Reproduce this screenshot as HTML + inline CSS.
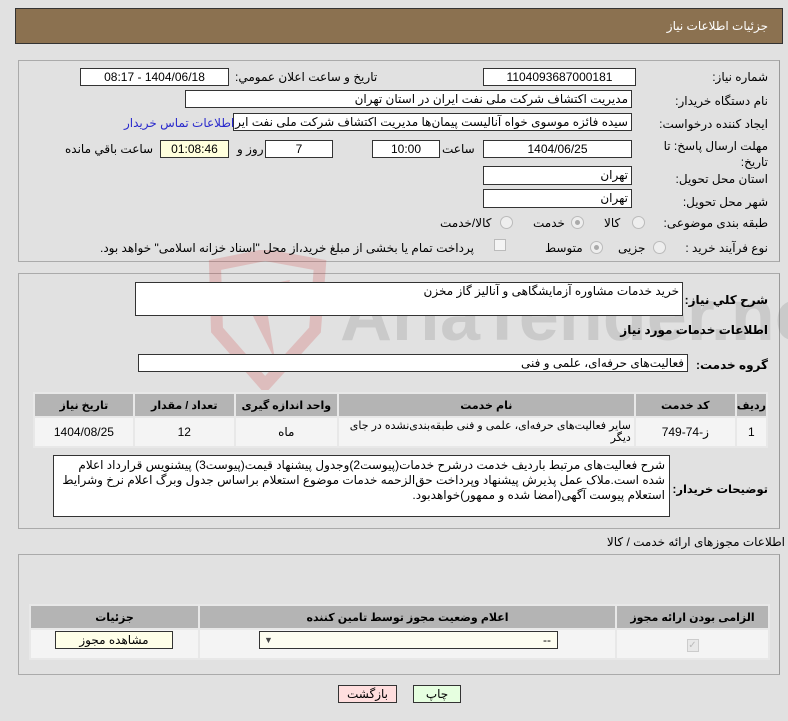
<!DOCTYPE html>
<html><head><meta charset="utf-8"><style>
*{box-sizing:border-box;margin:0;padding:0}
body{width:788px;height:721px;background:#e1e1e1;font-family:"Liberation Sans","DejaVu Sans",sans-serif;font-size:12px;color:#000;position:relative;overflow:hidden;direction:rtl}
.a{position:absolute;white-space:nowrap}
.box{position:absolute;background:#fff;border:1px solid #333;text-align:center;line-height:16px;overflow:hidden;white-space:nowrap}
.panel{position:absolute;border:1px solid #aaa;border-right-color:#999;left:18px;width:762px}
.lbl{position:absolute;right:20px;white-space:nowrap}
.rad{position:absolute;width:13px;height:13px;border-radius:50%;border:1px solid #bbb;background:#eee}
.rad.on::after{content:"";position:absolute;left:3px;top:3px;width:5px;height:5px;border-radius:50%;background:#aaa}
table{border-collapse:collapse;position:absolute}
td,th{border:2px solid #e8e8e8;text-align:center}
th{background:#b4b4b4;font-weight:bold;font-size:11px;height:24px}
td{background:#f4f4f4;height:30px}
</style></head><body>
<div class="a" style="left:15px;top:8px;width:768px;height:36px;background:#8b7150;border:1px solid #333"></div>
<div class="a" style="right:20px;top:19px;color:#fff">جزئیات اطلاعات نیاز</div>

<div class="panel" style="top:60px;height:202px"></div>
<div class="panel" style="top:273px;height:256px"></div>

<svg class="a" style="left:195px;top:250px;opacity:.18" width="600" height="140" viewBox="0 0 600 140">
<path d="M20 15 L70 5 L125 15 L120 80 L70 135 L22 80 Z" fill="none" stroke="#c22" stroke-width="12"/>
<path d="M45 40 L95 30 L85 60 L72 60 L80 110 L60 70 Z" fill="#c22"/>
<text x="145" y="90" font-size="72" font-family="Liberation Sans" font-weight="bold" fill="#666" direction="ltr">AriaTender.neT</text>
</svg>

<div class="lbl" style="top:70px">شماره نیاز:</div>
<div class="box" style="left:483px;top:68px;width:153px;height:18px">1104093687000181</div>
<div class="a" style="left:235px;top:70px">تاریخ و ساعت اعلان عمومي:</div>
<div class="box" style="left:80px;top:68px;width:149px;height:18px">1404/06/18 - 08:17</div>
<div class="lbl" style="top:94px">نام دستگاه خریدار:</div>
<div class="box" style="left:185px;top:90px;width:447px;height:18px;text-align:right;padding-right:3px">مدیریت اکتشاف شرکت ملی نفت ایران در استان تهران</div>
<div class="lbl" style="top:117px">ایجاد کننده درخواست:</div>
<div class="box" style="left:233px;top:113px;width:399px;height:18px;text-align:right;padding-right:3px">سیده فائزه موسوی خواه آنالیست پیمان‌ها مدیریت اکتشاف شرکت ملی نفت ایر</div>
<div class="a" style="left:124px;top:116px;color:#2a2acc">اطلاعات تماس خریدار</div>
<div class="lbl" style="top:139px">مهلت ارسال پاسخ: تا</div>
<div class="lbl" style="top:155px">تاریخ:</div>
<div class="box" style="left:483px;top:140px;width:149px;height:18px">1404/06/25</div>
<div class="a" style="left:442px;top:142px">ساعت</div>
<div class="box" style="left:372px;top:140px;width:68px;height:18px">10:00</div>
<div class="box" style="left:265px;top:140px;width:68px;height:18px">7</div>
<div class="a" style="left:237px;top:142px">روز و</div>
<div class="box" style="left:160px;top:140px;width:69px;height:18px;background:#ffffdd">01:08:46</div>
<div class="a" style="left:65px;top:142px">ساعت باقي مانده</div>
<div class="lbl" style="top:172px">استان محل تحویل:</div>
<div class="box" style="left:483px;top:166px;width:149px;height:19px;text-align:right;padding-right:3px">تهران</div>
<div class="lbl" style="top:195px">شهر محل تحویل:</div>
<div class="box" style="left:483px;top:189px;width:149px;height:19px;text-align:right;padding-right:3px">تهران</div>
<div class="lbl" style="top:216px">طبقه بندی موضوعی:</div>
<div class="rad" style="left:632px;top:216px"></div><div class="a" style="left:604px;top:216px">کالا</div>
<div class="rad on" style="left:571px;top:216px"></div><div class="a" style="left:533px;top:216px">خدمت</div>
<div class="rad" style="left:500px;top:216px"></div><div class="a" style="left:440px;top:216px">کالا/خدمت</div>
<div class="lbl" style="top:241px">نوع فرآیند خرید :</div>
<div class="rad" style="left:653px;top:241px"></div><div class="a" style="left:618px;top:241px">جزیی</div>
<div class="rad on" style="left:590px;top:241px"></div><div class="a" style="left:545px;top:241px">متوسط</div>
<div class="a" style="left:494px;top:239px;width:12px;height:12px;border:1px solid #bbb;background:#f4f4f4"></div>
<div class="a" style="left:100px;top:241px">پرداخت تمام یا بخشی از مبلغ خرید،از محل "اسناد خزانه اسلامی" خواهد بود.</div>

<div class="lbl" style="top:293px;font-weight:bold">شرح کلي نیاز:</div>
<div class="box" style="left:135px;top:282px;width:548px;height:34px;text-align:right;padding-right:3px;line-height:16px">خرید خدمات مشاوره آزمایشگاهی و آنالیز گاز مخزن</div>
<div class="lbl" style="top:323px;font-weight:bold">اطلاعات خدمات مورد نیاز</div>
<div class="lbl" style="top:358px;font-weight:bold">گروه خدمت:</div>
<div class="box" style="left:138px;top:354px;width:550px;height:18px;text-align:right;padding-right:3px">فعالیت‌های حرفه‌ای، علمی و فنی</div>
<table style="left:33px;top:392px;width:735px">
<tr><th style="width:30px">ردیف</th><th style="width:101px">کد خدمت</th><th style="width:297px">نام خدمت</th><th style="width:103px">واحد اندازه گیری</th><th style="width:101px">تعداد / مقدار</th><th>تاریخ نیاز</th></tr>
<tr><td>1</td><td>ز-74-749</td><td style="text-align:right;font-size:11px;line-height:12px;padding-right:3px">سایر فعالیت‌های حرفه‌ای، علمی و فنی طبقه‌بندی‌نشده در جای دیگر</td><td>ماه</td><td>12</td><td>1404/08/25</td></tr>
</table>
<div class="lbl" style="top:482px;font-weight:bold;font-size:11.5px">توضیحات خریدار:</div>
<div class="box" style="left:53px;top:455px;width:617px;height:62px;text-align:right;padding:2px 4px;white-space:normal;line-height:15px">شرح فعالیت‌های مرتبط بارديف خدمت درشرح خدمات(پیوست2)وجدول پیشنهاد قیمت(پیوست3) پیشنویس قرارداد اعلام شده است.ملاک عمل پذيرش پیشنهاد وپرداخت حق‌الزحمه خدمات موضوع استعلام براساس جدول وبرگ اعلام نرخ وشرايط استعلام پیوست آگهی(امضا شده و ممهور)خواهدبود.</div>

<div class="a" style="right:3px;top:535px">اطلاعات مجوزهای ارائه خدمت / کالا</div>
<div class="panel" style="top:554px;height:121px"></div>
<table style="left:29px;top:604px;width:741px">
<tr><th style="width:153px">الزامی بودن ارائه مجوز</th><th style="width:417px">اعلام وضعیت مجوز توسط تامین کننده</th><th>جزئیات</th></tr>
<tr><td style="height:26px"><span style="display:inline-block;width:12px;height:13px;border:1px solid #ccc;background:#e8e8e8;color:#bbb;font-size:10px;line-height:12px">✓</span></td><td></td><td></td></tr>
</table>
<div class="box" style="left:259px;top:631px;width:299px;height:18px;background:#fdfdf0;text-align:right;padding-right:6px">--<span style="position:absolute;left:4px;font-size:9px;color:#444">▼</span></div>
<div class="box" style="left:55px;top:631px;width:118px;height:18px;background:#ffffe8">مشاهده مجوز</div>

<div class="box" style="left:338px;top:685px;width:59px;height:18px;background:#ffdede">بازگشت</div>
<div class="box" style="left:413px;top:685px;width:48px;height:18px;background:#e6ffe0">چاپ</div>
</body></html>
